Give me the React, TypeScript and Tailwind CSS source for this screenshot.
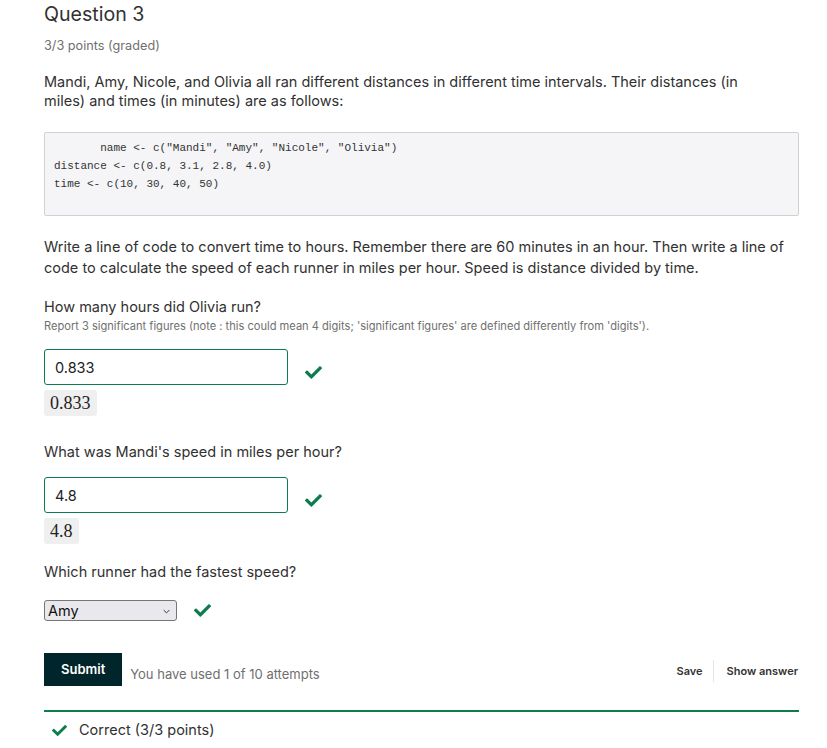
const font = { fontFamily: 'Inter, "Noto Sans", sans-serif' };

function Check({ className = "" }: { className?: string }) {
  return (
    <svg viewBox="0 0 512 512" className={className} fill="#0d7d4d" aria-hidden="true">
      <path d="M173.898 439.404l-166.4-166.4c-9.997-9.997-9.997-26.206 0-36.204l36.203-36.204c9.997-9.998 26.207-9.998 36.204 0L192 312.69 432.095 72.596c9.997-9.997 26.207-9.997 36.204 0l36.203 36.204c9.997 9.997 9.997 26.206 0 36.204l-294.4 294.401c-9.998 9.997-26.207 9.997-36.204-.001z" />
    </svg>
  );
}

function NumericAnswer({ value, top }: { value: string; top: string }) {
  return (
    <>
      <div className={`flex items-center ${top}`}>
        <input
          readOnly
          value={value}
          className="w-[244px] h-[36px] border border-[#0d7d4d] rounded-[3px] px-[10px] text-[14.5px] text-[#222] bg-white outline-none"
        />
        <Check className="w-[17px] h-[17px] ml-[17px] mt-[10px]" />
      </div>
      <div className="mt-[5px]">
        <span
          className="inline-block h-[26px] leading-[26px] px-[6px] bg-[#efefef] rounded-[3px] text-[18px] text-[#222]"
          style={{ fontFamily: '"Liberation Serif", "DejaVu Serif", serif' }}
        >
          {value}
        </span>
      </div>
    </>
  );
}

export default function App() {
  return (
    <div className="bg-white min-h-[748px] pl-[44px] pr-[28px] text-[#313131]" style={font}>
      <h2 className="text-[19.6px] leading-[28px] text-[#313131]">Question 3</h2>
      <div className="mt-[8px] text-[12.7px] leading-[20px] text-[#6f6f6f]">3/3 points (graded)</div>

      <p className="mt-[16px] text-[14.5px] leading-[19px]">
        Mandi, Amy, Nicole, and Olivia all ran different distances in different time intervals. Their distances (in
        <br />
        miles) and times (in minutes) are as follows:
      </p>

      <pre
        className="mt-[22px] h-[84px] border border-[#d2d2d2] rounded-[2px] bg-[#f5f5f7] pt-[6px] px-[9px] text-[11px] leading-[18px] text-[#333]"
        style={{ fontFamily: '"Liberation Mono", "DejaVu Sans Mono", monospace' }}
      >
        {'       name <- c("Mandi", "Amy", "Nicole", "Olivia")\ndistance <- c(0.8, 3.1, 2.8, 4.0)\ntime <- c(10, 30, 40, 50)'}
      </pre>

      <p className="mt-[20px] text-[14.5px] leading-[21px]">
        Write a line of code to convert time to hours. Remember there are 60 minutes in an hour. Then write a line of
        code to calculate the speed of each runner in miles per hour. Speed is distance divided by time.
      </p>

      <div className="mt-[19px] text-[14.5px] leading-[20px]">How many hours did Olivia run?</div>
      <div className="mt-[1px] text-[11.1px] leading-[16px] text-[#6f6f6f]">
        Report 3 significant figures (note : this could mean 4 digits; 'significant figures' are defined differently from 'digits').
      </div>
      <NumericAnswer value="0.833" top="mt-[15px]" />

      <div className="mt-[26px] text-[14.5px] leading-[20px]">What was Mandi's speed in miles per hour?</div>
      <NumericAnswer value="4.8" top="mt-[15px]" />

      <div className="mt-[18px] text-[14.5px] leading-[20px]">Which runner had the fastest speed?</div>
      <div className="mt-[18px] flex items-center">
        <div className="relative w-[133px] h-[21px] border border-[#767676] rounded-[3px] bg-[#e9e9ed] flex items-center pl-[3px] text-[14.5px] text-[#111]">
          Amy
          <svg viewBox="0 0 10 6" className="absolute right-[6px] top-[8px] w-[7px] h-[5px]" fill="none" stroke="#333" strokeWidth="1.4">
            <path d="M1 1l4 4 4-4" />
          </svg>
        </div>
        <Check className="w-[17px] h-[17px] ml-[17px]" />
      </div>

      <div className="mt-[32px] flex items-start">
        <button className="h-[33px] px-[17px] bg-[#00262b] text-white text-[13px] font-semibold">Submit</button>
        <span className="ml-[8px] mt-[12px] text-[13px] leading-[18px] text-[#6f6f6f]">You have used 1 of 10 attempts</span>
        <div className="ml-auto mt-[7px] flex items-center text-[11px] font-semibold text-[#333]">
          <span className="leading-[18px]">Save</span>
          <span className="ml-[10px] mr-[13px] w-px h-[22px] bg-[#e6e6e6]" />
          <span className="leading-[18px] mr-[1px]">Show answer</span>
        </div>
      </div>

      <div className="mt-[24px] h-[2px] bg-[#0d7d4d]" />
      <div className="mt-[8px] flex items-center text-[14.5px] leading-[20px]">
        <Check className="ml-[8px] w-[15px] h-[15px]" />
        <span className="ml-[12px]">Correct (3/3 points)</span>
      </div>
    </div>
  );
}
